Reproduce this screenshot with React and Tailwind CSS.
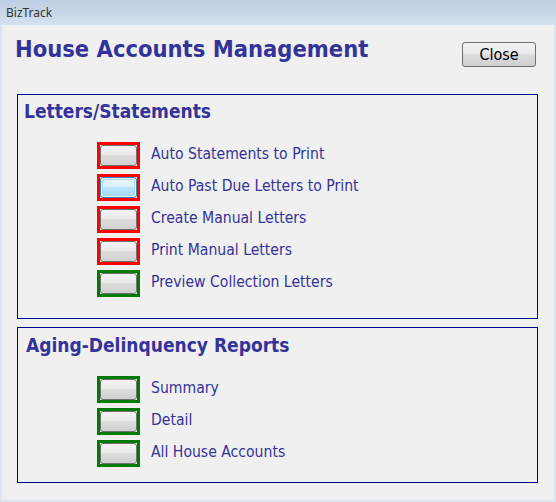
import React from "react";

const font = { fontFamily: '"DejaVu Sans Condensed", "DejaVu Sans", sans-serif' };

function ItemButton({ color, focused }) {
  const frame =
    color === "red" ? "border-[#ff0000]" : "border-[#007a00]";
  return (
    <div className={`w-[43px] h-[27px] border-[3px] ${frame} flex`}>
      {focused ? (
        <div className="flex-1 rounded-[3px] border border-[#3c7fb1] p-px">
          <div className="w-full h-full rounded-[2px] border border-[#9fdcf5] bg-[linear-gradient(#eaf6fd_0%,#d9f0fc_45%,#bee6fd_50%,#a7d9f5_100%)]" />
        </div>
      ) : (
        <div className="flex-1 rounded-[3px] border border-[#707070] bg-[linear-gradient(#f2f2f2_0%,#ebebeb_45%,#dddddd_50%,#cfcfcf_100%)]" />
      )}
    </div>
  );
}

function Row({ color, label, focused }) {
  return (
    <div className="h-[32px] flex items-center pl-[79px]">
      <ItemButton color={color} focused={focused} />
      <span className="ml-[11px] text-[15.6px] leading-none text-[#333399]" style={font}>
        {label}
      </span>
    </div>
  );
}

export default function App() {
  return (
    <div className="w-[556px] h-[502px] bg-[#f0f0f0] flex flex-col overflow-hidden">
      <div className="h-[25px] shrink-0 bg-[linear-gradient(#bccee2,#d5e1ef)] flex items-center pl-[6px]">
        <span className="text-[12px] text-[#333333]" style={{ fontFamily: '"Noto Sans", "DejaVu Sans", sans-serif' }}>
          BizTrack
        </span>
      </div>
      <div className="flex-1 flex flex-col border-x-2 border-b-2 border-[#dbe4ef]">
        <div className="flex justify-between items-start pl-[13px] pr-[18px] pt-[9px] h-[69px]">
          <h1 className="text-[23.5px] font-bold leading-[30px] text-[#333399]" style={font}>
            House Accounts Management
          </h1>
          <button
            className="mt-[8px] w-[74px] h-[25px] rounded-[3px] border border-[#707070] bg-[linear-gradient(#f2f2f2_0%,#ebebeb_45%,#dddddd_50%,#cfcfcf_100%)] text-[16px] text-black flex items-center justify-center"
            style={{ fontFamily: '"DejaVu Sans Condensed", "DejaVu Sans", sans-serif' }}
          >
            Close
          </button>
        </div>
        <div className="ml-[15px] w-[521px] h-[225px] border border-[#00008b] flex flex-col">
          <div className="h-[44px] pl-[6px] pt-[5px]">
            <h2 className="text-[19px] font-bold leading-[22px] text-[#333399]" style={font}>
              Letters/Statements
            </h2>
          </div>
          <Row color="red" label="Auto Statements to Print" />
          <Row color="red" label="Auto Past Due Letters to Print" focused />
          <Row color="red" label="Create Manual Letters" />
          <Row color="red" label="Print Manual Letters" />
          <Row color="green" label="Preview Collection Letters" />
        </div>
        <div className="mt-[8px] ml-[15px] w-[521px] h-[156px] border border-[#00008b] flex flex-col">
          <div className="h-[45px] pl-[8px] pt-[6px]">
            <h2 className="text-[19px] font-bold leading-[22px] text-[#333399]" style={font}>
              Aging-Delinquency Reports
            </h2>
          </div>
          <Row color="green" label="Summary" />
          <Row color="green" label="Detail" />
          <Row color="green" label="All House Accounts" />
        </div>
      </div>
    </div>
  );
}
